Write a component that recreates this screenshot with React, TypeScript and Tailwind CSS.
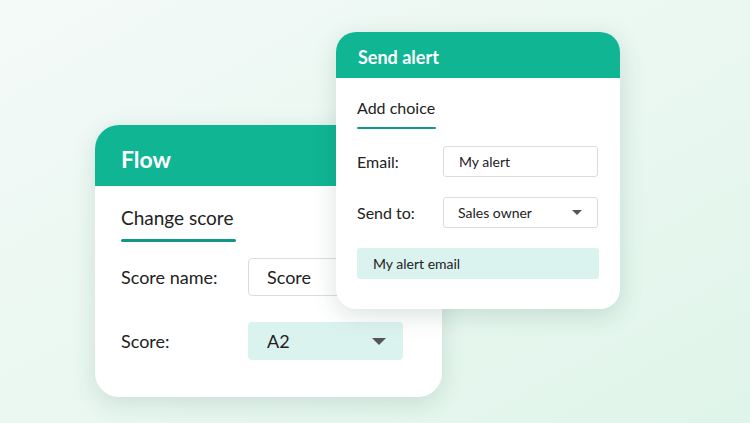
const Caret = ({ className }: { className: string }) => (
  <svg viewBox="0 0 14 7" className={className}>
    <path d="M0 0 H14 L7 7 Z" fill="#555555" />
  </svg>
);

function FlowCard() {
  return (
    <div className="ml-[95px] mt-[125px] w-[347px] h-[272px] bg-white rounded-[24px] shadow-[0_6px_24px_rgba(20,80,60,0.14)] overflow-hidden">
      <div className="h-[61px] bg-[#10b594] flex items-center px-[26px] pt-[7px]">
        <span className="text-white text-[23px] font-bold">Flow</span>
      </div>
      <div className="pl-[26px] pt-[20px]">
        <div className="inline-block">
          <div className="text-[19px] leading-[24px] text-[#222]">Change score</div>
          <div className="mt-[9px] h-[3px] w-[115px] bg-[#12958a] rounded-full" />
        </div>
        <div className="mt-[16px] flex items-center">
          <span className="w-[127px] text-[18px] text-[#222]">Score name:</span>
          <div className="w-[155px] h-[38px] border border-[#dcdcdc] rounded-[4px] flex items-center px-[18px] text-[18px] text-[#222]">
            Score
          </div>
        </div>
        <div className="mt-[26px] flex items-center">
          <span className="w-[127px] text-[18px] text-[#222]">Score:</span>
          <div className="w-[155px] h-[38px] bg-[#dbf3ee] rounded-[4px] flex items-center justify-between pl-[19px] pr-[17px] text-[18px] text-[#222]">
            A2
            <Caret className="w-[14px] h-[7px]" />
          </div>
        </div>
      </div>
    </div>
  );
}

function AlertCard() {
  return (
    <div className="absolute left-[336px] top-[32px] w-[284px] h-[277px] bg-white rounded-[20px] shadow-[0_6px_24px_rgba(20,80,60,0.16)] overflow-hidden">
      <div className="h-[46px] bg-[#10b594] flex items-center px-[22px] pt-[4px]">
        <span className="text-white text-[18px] font-bold">Send alert</span>
      </div>
      <div className="px-[21px] pt-[18px]">
        <div className="inline-block">
          <div className="text-[16px] leading-[20px] text-[#222]">Add choice</div>
          <div className="mt-[9px] h-[2px] w-[79px] bg-[#12958a] rounded-full" />
        </div>
        <div className="mt-[17px] flex items-center">
          <span className="w-[86px] text-[16px] text-[#222]">Email:</span>
          <div className="w-[155px] h-[31px] border border-[#dcdcdc] rounded-[3px] flex items-center px-[15px] text-[14px] text-[#222]">
            My alert
          </div>
        </div>
        <div className="mt-[20px] flex items-center">
          <span className="w-[86px] text-[16px] text-[#222]">Send to:</span>
          <div className="w-[155px] h-[31px] border border-[#dcdcdc] rounded-[3px] flex items-center justify-between pl-[14px] pr-[15px] text-[14px] text-[#222]">
            Sales owner
            <Caret className="w-[10px] h-[5px]" />
          </div>
        </div>
        <div className="mt-[20px] h-[31px] bg-[#dbf3ee] rounded-[3px] flex items-center px-[16px] text-[14px] text-[#222]">
          My alert email
        </div>
      </div>
    </div>
  );
}

export default function App() {
  return (
    <div
      className="relative w-[750px] h-[423px] overflow-hidden bg-gradient-to-br from-[#f4faf8] to-[#e0f5ea]"
      style={{ fontFamily: 'Lato, "Open Sans", sans-serif' }}
    >
      <div className="flex flex-col">
        <FlowCard />
      </div>
      <AlertCard />
    </div>
  );
}
